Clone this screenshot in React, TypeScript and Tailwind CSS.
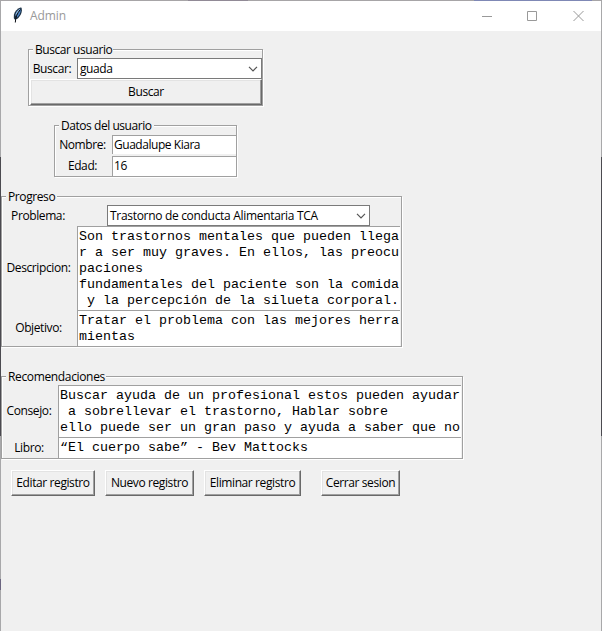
import type { ReactNode } from "react";

const ui = "font-['Open_Sans','Noto_Sans',sans-serif]";
const mono = "font-['Liberation_Mono',monospace]";

function Group({ title, legend, className, children }: { title: string; legend: string; className: string; children: ReactNode }) {
  return (
    <section className={`relative border border-[#a0a0a0] shadow-[1px_1px_0_#fff,inset_1px_1px_0_#fff] ${className}`}>
      <h2 className={`absolute left-[4px] -top-[8px] h-4 whitespace-nowrap bg-[#f0f0f0] pl-[2px] leading-4 ${legend}`}>{title}</h2>
      {children}
    </section>
  );
}

function Label({ className, children }: { className: string; children: ReactNode }) {
  return <label className={`flex shrink-0 items-center justify-center whitespace-nowrap pr-[2px] ${className}`}>{children}</label>;
}

function Combo({ className, text, children }: { className: string; text: string; children: ReactNode }) {
  return (
    <div className={`flex h-[21px] items-center justify-between border border-[#7a7a7a] bg-white pl-[2px] pr-[3px] ${className}`}>
      <span className={`whitespace-nowrap ${text}`}>{children}</span>
      <svg width="10" height="6" viewBox="0 0 10 6" fill="none" stroke="#555" strokeWidth="1.2">
        <path d="M1 0.8 5 4.8 9 0.8" />
      </svg>
    </div>
  );
}

function Field({ className, children }: { className: string; children: ReactNode }) {
  return (
    <div className={`overflow-hidden whitespace-pre border-l border-t border-l-[#a0a0a0] border-t-[#a0a0a0] bg-white ${className}`}>{children}</div>
  );
}

function Button({ className, children }: { className: string; children: ReactNode }) {
  return (
    <button
      className={`flex h-[26px] shrink-0 items-center justify-center whitespace-nowrap border border-b-[#696969] border-l-white border-r-[#696969] border-t-white bg-[#f0f0f0] shadow-[inset_-1px_-1px_0_#a0a0a0,inset_1px_1px_0_#e3e3e3] ${className}`}
    >
      {children}
    </button>
  );
}

function Feather() {
  return (
    <svg width="12" height="16" viewBox="0 0 12 16">
      <path d="M8.500.5C5.500 1.500 2.600 4.300 1.900 7.800L1.800 11.200l1.200 1.500 2.900-1.300C8.300 9 9.600 6.500 9.900 3.500L9.600.8z" fill="#1b3044" />
      <path d="M8.300 1.500C5.300 3.200 3.500 5.600 3.100 9l4-4z" fill="#8ebbe8" />
      <path d="M8.900 2.500C8.700 6 7 8.900 4.500 10.800L4.200 9z" fill="#4b86cc" />
      <path d="M7.800 3C5.300 6.500 3.500 10 3.300 15.500" fill="none" stroke="#080c12" strokeWidth="1" />
    </svg>
  );
}

export default function App() {
  return (
    <div className={`flex h-[631px] w-[602px] flex-col overflow-hidden text-[12px] tracking-[-0.4px] text-black ${ui}`}>
      <div className="h-px shrink-0 bg-[linear-gradient(90deg,#a7a5a7_0_188px,#918a96_188px_248px,#a7a5a7_248px_474px,#7f88b5_474px_592px,#a7a5a7_592px)]" />
      <div className="flex min-h-0 flex-1">
        <div className="w-px shrink-0 bg-[linear-gradient(180deg,#a8a8aa_0_156px,#4b4a50_156px_435px,#a8a8aa_435px_578px,#6b6580_578px_589px,#a8a8aa_589px)]" />
        <div className="flex w-[600px] flex-col bg-[#f0f0f0]">
          <header className="flex h-[30px] shrink-0 items-center bg-white text-[#999]">
            <div className="ml-[11px] flex w-[18px] pb-[2px]">
              <Feather />
            </div>
            <span className="text-[12px] tracking-[-0.1px]">Admin</span>
            <svg className="ml-auto mr-[15px]" width="104" height="12" viewBox="0 0 104 12" fill="none" stroke="#999">
              <path d="M0 6.500h10M45.500 1.500h9v9h-9zM91.500 1l10 10M101.500 1l-10 10" />
            </svg>
          </header>

          <Group title="Buscar usuario" legend="w-[80px] tracking-[-0.45px]" className="ml-[27px] mt-[18px] h-[57px] w-[235px] shrink-0">
            <div className="flex pt-[8px]">
              <Label className="w-[48px]">Buscar:</Label>
              <Combo className="w-[185px]" text="">guada</Combo>
            </div>
            <Button className="ml-px w-[232px]">Buscar</Button>
          </Group>

          <Group title="Datos del usuario" legend="w-[95px] tracking-[-0.45px]" className="ml-[53px] mt-[19px] h-[52px] w-[183px] shrink-0">
            <div className="flex h-[30px] pt-[9px]">
              <Label className="h-[20px] w-[57px]">Nombre:</Label>
              <Field className="h-[19px] w-[124px] pl-[1px] leading-[18px] tracking-[-0.46px]">Guadalupe Kiara</Field>
            </div>
            <div className="flex">
              <Label className="h-[20px] w-[57px]">Edad:</Label>
              <Field className="h-[20px] w-[124px] pl-[1px] leading-[18px]">16</Field>
            </div>
          </Group>

          <Group title="Progreso" legend="w-[51px]" className="mt-[19px] h-[151px] w-[401px] shrink-0">
            <div className="flex pt-[8px]">
              <Label className="mr-[31px] h-[21px] w-[74px]">Problema:</Label>
              <Combo className="w-[263px]" text="tracking-[-0.31px]">Trastorno de conducta Alimentaria TCA</Combo>
            </div>
            <div className="flex">
              <Label className="h-[84px] w-[75px]">Descripcion:</Label>
              <Field className={`h-[84px] w-[323px] pl-[1px] pt-[2px] text-[13.333px] leading-4 tracking-normal ${mono}`}>
                {"Son trastornos mentales que pueden llega\nr a ser muy graves. En ellos, las preocu\npaciones\nfundamentales del paciente son la comida\n y la percepción de la silueta corporal."}
              </Field>
            </div>
            <div className="flex">
              <Label className="h-[36px] w-[75px]">Objetivo:</Label>
              <Field className={`h-[36px] w-[323px] pl-[1px] pt-[2px] text-[13.333px] leading-4 tracking-normal ${mono}`}>
                {"Tratar el problema con las mejores herra\nmientas"}
              </Field>
            </div>
          </Group>

          <Group title="Recomendaciones" legend="w-[100px] tracking-[-0.35px]" className="mt-[29px] h-[83px] w-[462px] shrink-0">
            <div className="flex pt-[8px]">
              <Label className="h-[52px] w-[56px]">Consejo:</Label>
              <Field className={`h-[52px] w-[403px] pl-[1px] pt-[2px] text-[13.333px] leading-4 tracking-normal ${mono}`}>
                {"Buscar ayuda de un profesional estos pueden ayudar\n a sobrellevar el trastorno, Hablar sobre\nello puede ser un gran paso y ayuda a saber que no"}
              </Field>
            </div>
            <div className="flex">
              <Label className="h-[21px] w-[56px]">Libro:</Label>
              <Field className={`h-[21px] w-[403px] pl-[1px] pt-[2px] text-[13.333px] leading-4 tracking-normal ${mono}`}>
                {"“El cuerpo sabe” - Bev Mattocks"}
              </Field>
            </div>
          </Group>

          <div className="ml-[10px] mt-[11px] flex gap-[10px]">
            <Button className="w-[84px]">Editar registro</Button>
            <Button className="w-[89px]">Nuevo registro</Button>
            <Button className="w-[97px]">Eliminar registro</Button>
            <Button className="ml-[10px] w-[79px]">Cerrar sesion</Button>
          </div>
        </div>
        <div className="w-px shrink-0 bg-[linear-gradient(180deg,#a8a8aa_0_156px,#4b4a50_156px_435px,#a8a8aa_435px)]" />
      </div>
    </div>
  );
}
